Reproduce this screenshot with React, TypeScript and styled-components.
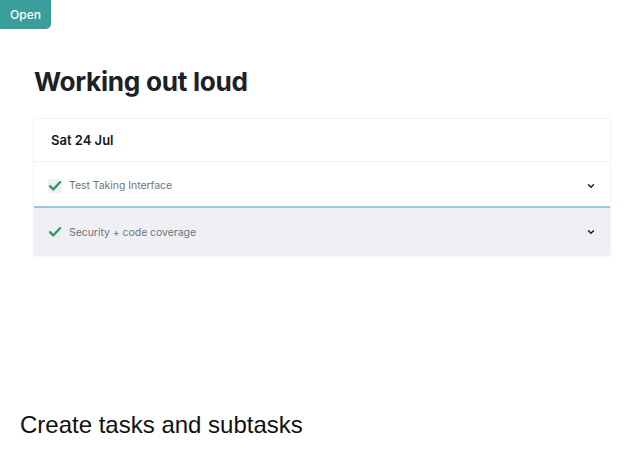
import React from "react";
import styled, { createGlobalStyle } from "styled-components";

const Global = createGlobalStyle`
  html, body { margin: 0; padding: 0; background: #fff; }
  body { font-family: "Inter", "Liberation Sans", sans-serif; }
`;

const Page = styled.div`
  width: 640px;
  height: 458px;
  position: relative;
  display: flex;
  flex-direction: column;
  overflow: hidden;
`;

const OpenButton = styled.button`
  align-self: flex-start;
  width: 51px;
  height: 29px;
  border: none;
  border-radius: 0 0 5px 0;
  background: #3a9e9a;
  color: #fff;
  font-family: "Inter", "Liberation Sans", sans-serif;
  font-size: 12px;
  font-weight: 500;
  padding: 0;
`;

const Main = styled.div`
  padding: 37px 29px 0 33px;
  display: flex;
  flex-direction: column;
`;

const Title = styled.h1`
  margin: 0 0 21px 1px;
  font-family: "Inter", sans-serif;
  font-size: 26.2px;
  font-weight: 700;
  letter-spacing: -0.3px;
  color: #1d2127;
  line-height: 31px;
`;

const Card = styled.div`
  border: 1px solid #f1f2f4;
  border-radius: 3px;
  box-shadow: 0 1px 2px rgba(0, 0, 0, 0.04);
  background: #fff;
  overflow: hidden;
`;

const CardHeader = styled.div`
  height: 42px;
  display: flex;
  align-items: center;
  padding-left: 17px;
  font-size: 13px;
  font-weight: 600;
  color: #15181c;
  border-bottom: 1px solid #f0f1f3;
`;

const Row = styled.div<{ $active?: boolean }>`
  height: ${(p) => (p.$active ? 49 : 44)}px;
  display: flex;
  align-items: center;
  padding: ${(p) => (p.$active ? "1px 14px 0 14px" : "3px 14px 0 14px")};
  background: ${(p) => (p.$active ? "#eef0f3" : "#fff")};
  border-top: ${(p) => (p.$active ? "2px solid #9ac6e2" : "none")};
  box-sizing: border-box;
`;

const CheckBox = styled.span<{ $boxed?: boolean }>`
  width: 14px;
  height: 14px;
  display: inline-flex;
  align-items: center;
  justify-content: center;
  border-radius: 2px;
  background: ${(p) => (p.$boxed ? "#eef0f2" : "transparent")};
  margin-right: 7px;
`;

const Label = styled.span`
  flex: 1;
  font-size: 10.5px;
  letter-spacing: -0.05px;
  color: #70757c;
`;

const Chevron = () => (
  <svg width="10" height="10" viewBox="0 0 10 10">
    <path d="M2.5 3.8 L5 6.2 L7.5 3.8" fill="none" stroke="#1d2127" strokeWidth="1.5" strokeLinecap="round" strokeLinejoin="round" />
  </svg>
);

const Check = () => (
  <svg width="14" height="14" viewBox="0 0 14 14">
    <path d="M2 7.2 L5.3 10.4 L12 3.2" fill="none" stroke="#2f9b5f" strokeWidth="2.3" strokeLinecap="round" strokeLinejoin="round" />
  </svg>
);

const Caption = styled.div`
  margin-top: auto;
  margin-bottom: 19px;
  padding-left: 20px;
  font-family: "Liberation Sans", Arial, sans-serif;
  font-size: 24px;
  color: #111;
`;

export default function App() {
  return (
    <Page>
      <Global />
      <OpenButton>Open</OpenButton>
      <Main>
        <Title>Working out loud</Title>
        <Card>
          <CardHeader>Sat 24 Jul</CardHeader>
          <Row>
            <CheckBox $boxed><Check /></CheckBox>
            <Label>Test Taking Interface</Label>
            <Chevron />
          </Row>
          <Row $active>
            <CheckBox><Check /></CheckBox>
            <Label>Security + code coverage</Label>
            <Chevron />
          </Row>
        </Card>
      </Main>
      <Caption>Create tasks and subtasks</Caption>
    </Page>
  );
}
